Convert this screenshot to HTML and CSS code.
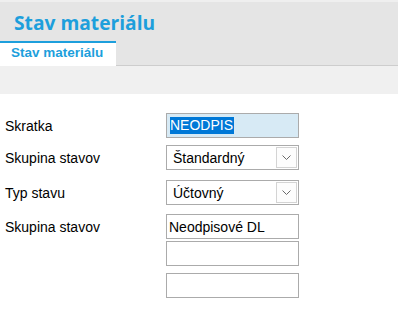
FILE: index.html
```html
<!DOCTYPE html>
<html lang="sk">
<head>
<meta charset="utf-8">
<title>Stav materiálu</title>
<link rel="stylesheet" href="styles.css">
</head>
<body>
<div class="header">
  <h1 class="title">Stav materiálu</h1>
  <div class="tabs">
    <div class="tab">Stav materiálu</div>
  </div>
</div>
<div class="toolbar"></div>
<div class="form">
  <div class="row r1">
    <div class="label">Skratka</div>
    <div class="field active"><span class="sel">NEODPIS</span></div>
  </div>
  <div class="row r2">
    <div class="label">Skupina stavov</div>
    <div class="field select"><span class="val">Štandardný</span><span class="btn"><svg width="9" height="5" viewBox="0 0 9 5"><path d="M0.5 0.5 L4.5 4.5 L8.5 0.5" fill="none" stroke="#6a6a6a" stroke-width="1"/></svg></span></div>
  </div>
  <div class="row r3">
    <div class="label">Typ stavu</div>
    <div class="field select"><span class="val">Účtovný</span><span class="btn"><svg width="9" height="5" viewBox="0 0 9 5"><path d="M0.5 0.5 L4.5 4.5 L8.5 0.5" fill="none" stroke="#6a6a6a" stroke-width="1"/></svg></span></div>
  </div>
  <div class="row r4">
    <div class="label">Skupina stavov</div>
    <div class="field"><span class="val2">Neodpisové DL</span></div>
  </div>
  <div class="row r5">
    <div class="label"></div>
    <div class="field"></div>
  </div>
  <div class="row r6">
    <div class="label"></div>
    <div class="field"></div>
  </div>
</div>
</body>
</html>
```
FILE: styles.css
```css
html, body {
  margin: 0;
  padding: 0;
  background: #ffffff;
  font-family: "Liberation Sans", Arial, sans-serif;
}
.header {
  height: 63px;
  margin-top: 2px;
  background: #e5e5e5;
  border-bottom: 1px solid #cdcdcd;
  display: flex;
  flex-direction: column;
  justify-content: space-between;
  box-shadow: 0 -2px 0 #efefef;
}
.title {
  margin: 0;
  padding: 8px 0 0 14px;
  font-family: "Open Sans", sans-serif;
  font-weight: 700;
  font-size: 19.2px;
  line-height: 26px;
  color: #1d9fdc;
}
.tabs {
  display: flex;
  margin-bottom: -1px;
}
.tab {
  width: 105px;
  height: 23px;
  padding-left: 11px;
  border-top: 2px solid #1d9fdc;
  background: #ffffff;
  color: #1d9fdc;
  font-weight: 700;
  font-size: 13.5px;
  line-height: 20px;
}
.toolbar {
  height: 28px;
  background: #f0f0f0;
}
.form {
  padding-top: 19px;
  display: flex;
  flex-direction: column;
}
.row {
  display: flex;
  align-items: center;
  height: 25px;
}
.r2 { margin-top: 7px; }
.r3 { margin-top: 10px; }
.r4 { margin-top: 9px; }
.r5 { margin-top: 2px; }
.r6 { margin-top: 7px; }
.label {
  width: 161px;
  padding-left: 5px;
  font-size: 14px;
  color: #000000;
}
.field {
  box-sizing: border-box;
  width: 133px;
  height: 25px;
  border: 1px solid #ababab;
  background: #ffffff;
  display: flex;
  align-items: center;
  font-size: 14px;
  color: #000000;
}
.field.active {
  background: #d7eaf5;
  padding-left: 3px;
}
.sel {
  background: #0078d7;
  color: #ffffff;
  line-height: 17px;
  padding-right: 1px;
}
.select {
  justify-content: space-between;
  padding: 0 1px 0 6px;
}
.val2 {
  padding-left: 2px;
}
.btn {
  box-sizing: border-box;
  width: 21px;
  height: 21px;
  border: 1px solid #d4d4d4;
  background: #fdfdfd;
  display: flex;
  align-items: center;
  justify-content: center;
}
```
